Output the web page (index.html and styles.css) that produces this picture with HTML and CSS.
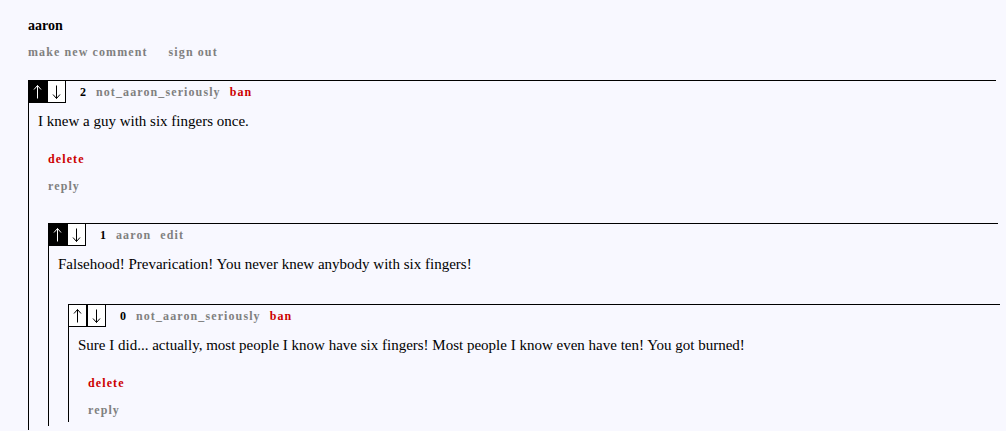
FILE: index.html
```html
<!DOCTYPE html>
<html>
<head>
<meta charset="utf-8">
<link rel="stylesheet" href="styles.css">
</head>
<body>
<div class="user">aaron</div>
<nav class="nav">
  <a class="link">make new comment</a>
  <a class="link">sign out</a>
</nav>
<div class="comment top">
  <div class="head">
    <div class="votes">
      <span class="vote on"><svg viewBox="0 0 17 21" width="17" height="21"><path d="M8.5 4.5V17.5M5 8.5L8.5 4.5L12 8.5"/></svg></span>
      <span class="vote"><svg viewBox="0 0 17 21" width="17" height="21"><path d="M8.5 4.5V17.5M5 13.5L8.5 17.5L12 13.5"/></svg></span>
    </div>
    <span class="score">2</span>
    <span class="link">not_aaron_seriously</span>
    <span class="link red">ban</span>
  </div>
  <p class="text">I knew a guy with six fingers once.</p>
  <div class="act"><span class="link red">delete</span></div>
  <div class="act"><span class="link">reply</span></div>
  <div class="comment nested">
    <div class="head">
      <div class="votes">
        <span class="vote on"><svg viewBox="0 0 17 21" width="17" height="21"><path d="M8.5 4.5V17.5M5 8.5L8.5 4.5L12 8.5"/></svg></span>
        <span class="vote"><svg viewBox="0 0 17 21" width="17" height="21"><path d="M8.5 4.5V17.5M5 13.5L8.5 17.5L12 13.5"/></svg></span>
      </div>
      <span class="score">1</span>
      <span class="link">aaron</span>
      <span class="link">edit</span>
    </div>
    <p class="text">Falsehood! Prevarication! You never knew anybody with six fingers!</p>
    <div class="comment nested">
      <div class="head">
        <div class="votes">
          <span class="vote"><svg viewBox="0 0 17 21" width="17" height="21"><path d="M8.5 4.5V17.5M5 8.5L8.5 4.5L12 8.5"/></svg></span>
          <span class="vote"><svg viewBox="0 0 17 21" width="17" height="21"><path d="M8.5 4.5V17.5M5 13.5L8.5 17.5L12 13.5"/></svg></span>
        </div>
        <span class="score">0</span>
        <span class="link">not_aaron_seriously</span>
        <span class="link red">ban</span>
      </div>
      <p class="text">Sure I did... actually, most people I know have six fingers! Most people I know even have ten! You got burned!</p>
      <div class="act"><span class="link red">delete</span></div>
      <div class="act"><span class="link">reply</span></div>
    </div>
  </div>
</div>
</body>
</html>
```
FILE: styles.css
```css
html, body {
  margin: 0;
  background: #f8f8ff;
  overflow: hidden;
}
body {
  padding: 18px 10px 0 28px;
  font-family: "Liberation Serif", "Times New Roman", serif;
  color: #000;
}
.user {
  font-weight: bold;
  font-size: 14px;
  line-height: 16px;
}
.nav {
  margin-top: 11px;
  display: flex;
  gap: 21px;
}
.link {
  font-weight: bold;
  font-size: 12px;
  letter-spacing: 1.1px;
  color: #808080;
  line-height: 14px;
}
.red { color: #cc0000; }
.comment {
  border-top: 1px solid #000;
  border-left: 1px solid #000;
  padding-bottom: 4px;
}
.top {
  margin-top: 21px;
}
.nested {
  margin-left: 19px;
  margin-right: -2px;
  margin-top: 29px;
}
.text + .nested { margin-top: 31px; }
.head {
  display: flex;
  align-items: center;
  height: 22px;
}
.votes {
  display: flex;
  align-self: flex-start;
}
.vote {
  display: block;
  width: 17px;
  height: 21px;
  border: 1px solid #000;
  border-top: none;
  background: #fff;
  stroke: #000;
}
.vote svg {
  display: block;
  fill: none;
  stroke-width: 1;
}
.vote:first-child { border-left: none; }
.vote.on { background: #000; stroke: #fff; }
.score {
  font-weight: bold;
  font-size: 12px;
  margin-left: 14px;
  margin-right: 10px;
}
.head .link { margin-right: 9px; }
.text {
  margin: 10px 0 0 9px;
  font-size: 15px;
  line-height: 17px;
}
.act {
  margin-left: 19px;
  margin-top: 9px;
}
.text + .act { margin-top: 19px; }
```
